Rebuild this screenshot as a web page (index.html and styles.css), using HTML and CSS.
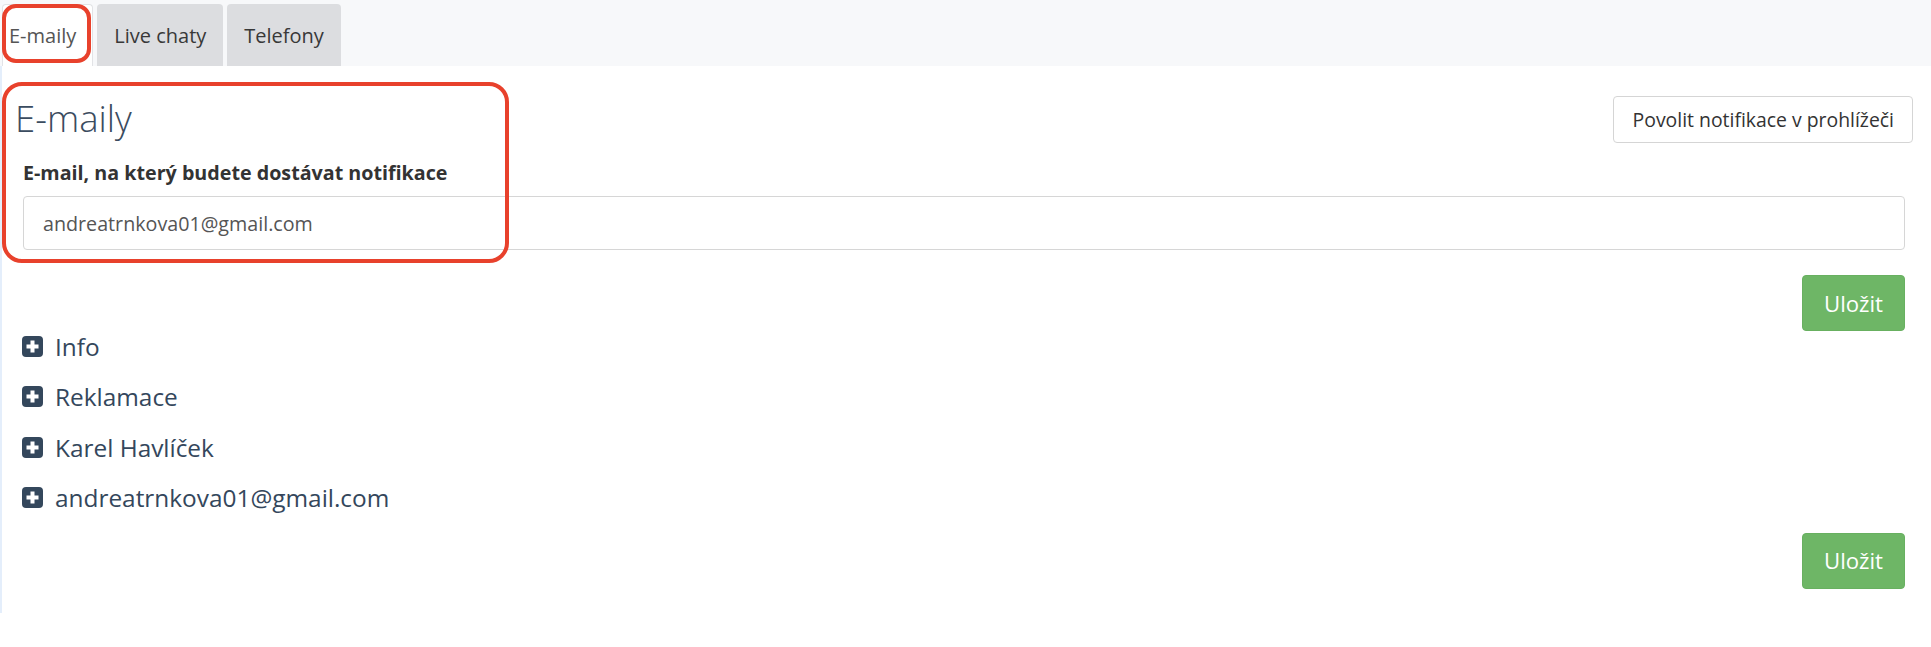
FILE: index.html
```html
<!DOCTYPE html>
<html lang="cs">
<head>
<meta charset="utf-8">
<title>Notifikace</title>
<link rel="stylesheet" href="styles.css">
</head>
<body>
<nav class="tabs-bar">
  <a class="tab tab-active tab-first">E-maily</a>
  <a class="tab">Live chaty</a>
  <a class="tab">Telefony</a>
</nav>
<main class="panel">
  <div class="panel-head">
    <h1 class="panel-title">E-maily</h1>
    <button class="btn btn-default">Povolit notifikace v prohlížeči</button>
  </div>
  <form class="form">
    <label class="form-label">E-mail, na který budete dostávat notifikace</label>
    <input class="form-input" type="text" value="andreatrnkova01@gmail.com">
    <div class="form-actions">
      <button type="button" class="btn btn-success">Uložit</button>
    </div>
    <ul class="groups">
      <li class="group"><svg class="group-icon" viewBox="0 0 21 21"><rect width="21" height="21" rx="4"/><path d="M10.5 4.5v12M4.5 10.5h12"/></svg><span>Info</span></li>
      <li class="group"><svg class="group-icon" viewBox="0 0 21 21"><rect width="21" height="21" rx="4"/><path d="M10.5 4.5v12M4.5 10.5h12"/></svg><span>Reklamace</span></li>
      <li class="group"><svg class="group-icon" viewBox="0 0 21 21"><rect width="21" height="21" rx="4"/><path d="M10.5 4.5v12M4.5 10.5h12"/></svg><span>Karel Havlíček</span></li>
      <li class="group"><svg class="group-icon" viewBox="0 0 21 21"><rect width="21" height="21" rx="4"/><path d="M10.5 4.5v12M4.5 10.5h12"/></svg><span>andreatrnkova01@gmail.com</span></li>
    </ul>
    <div class="form-actions form-actions-bottom">
      <button type="button" class="btn btn-success">Uložit</button>
    </div>
  </form>
</main>
<div class="mark mark-tab"></div>
<div class="mark mark-form"></div>
</body>
</html>
```
FILE: styles.css
```css
* { box-sizing: border-box; }

html, body {
  margin: 0;
  padding: 0;
  background: #ffffff;
  font-family: "Open Sans", "DejaVu Sans", sans-serif;
  color: #333333;
}

body { position: relative; }

.tabs-bar {
  display: flex;
  align-items: flex-end;
  gap: 4px;
  height: 66px;
  padding: 4px 0 0 2px;
  background: #f7f8fa;
}

.tab {
  display: flex;
  align-items: center;
  height: 62px;
  padding: 0 17px;
  background: #dcdde0;
  border-radius: 4px 4px 0 0;
  font-size: 20px;
  color: #383838;
  text-decoration: none;
}

.tab-active {
  background: #ffffff;
  border: 1px solid #e2e3e6;
  border-bottom: none;
  color: #555555;
}

.tab-first { padding: 0 16px 0 6px; }

.panel {
  border-left: 2px solid #e4eefb;
  padding: 30px 18px 24px 13px;
  min-height: 547px;
}

.panel-head {
  display: flex;
  justify-content: space-between;
  align-items: flex-start;
}

.panel-title {
  margin: 0;
  font-size: 36.5px;
  line-height: 44px;
  font-weight: 300;
  color: #3b4c60;
}

.btn {
  font-family: "Open Sans", "DejaVu Sans", sans-serif;
  border-radius: 4px;
  cursor: pointer;
}

.btn-default {
  height: 47px;
  padding: 0 18px 0 19px;
  font-size: 19.4px;
  color: #333333;
  background: #ffffff;
  border: 1px solid #d5d5d5;
}

.btn-success {
  height: 56px;
  padding: 0 21px;
  font-size: 22.2px;
  color: #ffffff;
  background: #6eb666;
  border: 1px solid #68b060;
}

.form {
  padding: 16px 8px 0 8px;
}

.form-label {
  display: block;
  font-size: 19.7px;
  line-height: 27px;
  font-weight: 700;
  color: #333333;
}

.form-input {
  display: block;
  width: 100%;
  height: 54px;
  margin-top: 10px;
  padding: 0 19px;
  font-family: "Open Sans", "DejaVu Sans", sans-serif;
  font-size: 19.7px;
  color: #555555;
  border: 1px solid #d6d6d6;
  border-radius: 4px;
  background: #ffffff;
}

.form-actions {
  display: flex;
  justify-content: flex-end;
  margin-top: 25px;
}

.form-actions-bottom { margin-top: 20px; }

.groups {
  list-style: none;
  margin: 0;
  padding: 0;
  display: flex;
  flex-direction: column;
  gap: 20.5px;
}

.group {
  display: flex;
  align-items: center;
  gap: 12px;
  height: 30px;
  font-size: 24.4px;
  color: #34475c;
}

.group-icon {
  width: 21px;
  height: 21px;
  flex: none;
  margin-left: -1px;
}

.group-icon rect { fill: #34475c; }
.group-icon path { stroke: #ffffff; stroke-width: 4; fill: none; }

.mark {
  position: absolute;
  border: 4px solid #e8412c;
  pointer-events: none;
}

.mark-tab {
  left: 2px;
  top: 4px;
  width: 89px;
  height: 59px;
  border-radius: 14px;
}

.mark-form {
  left: 2px;
  top: 82px;
  width: 507px;
  height: 181px;
  border-radius: 20px;
}
```
